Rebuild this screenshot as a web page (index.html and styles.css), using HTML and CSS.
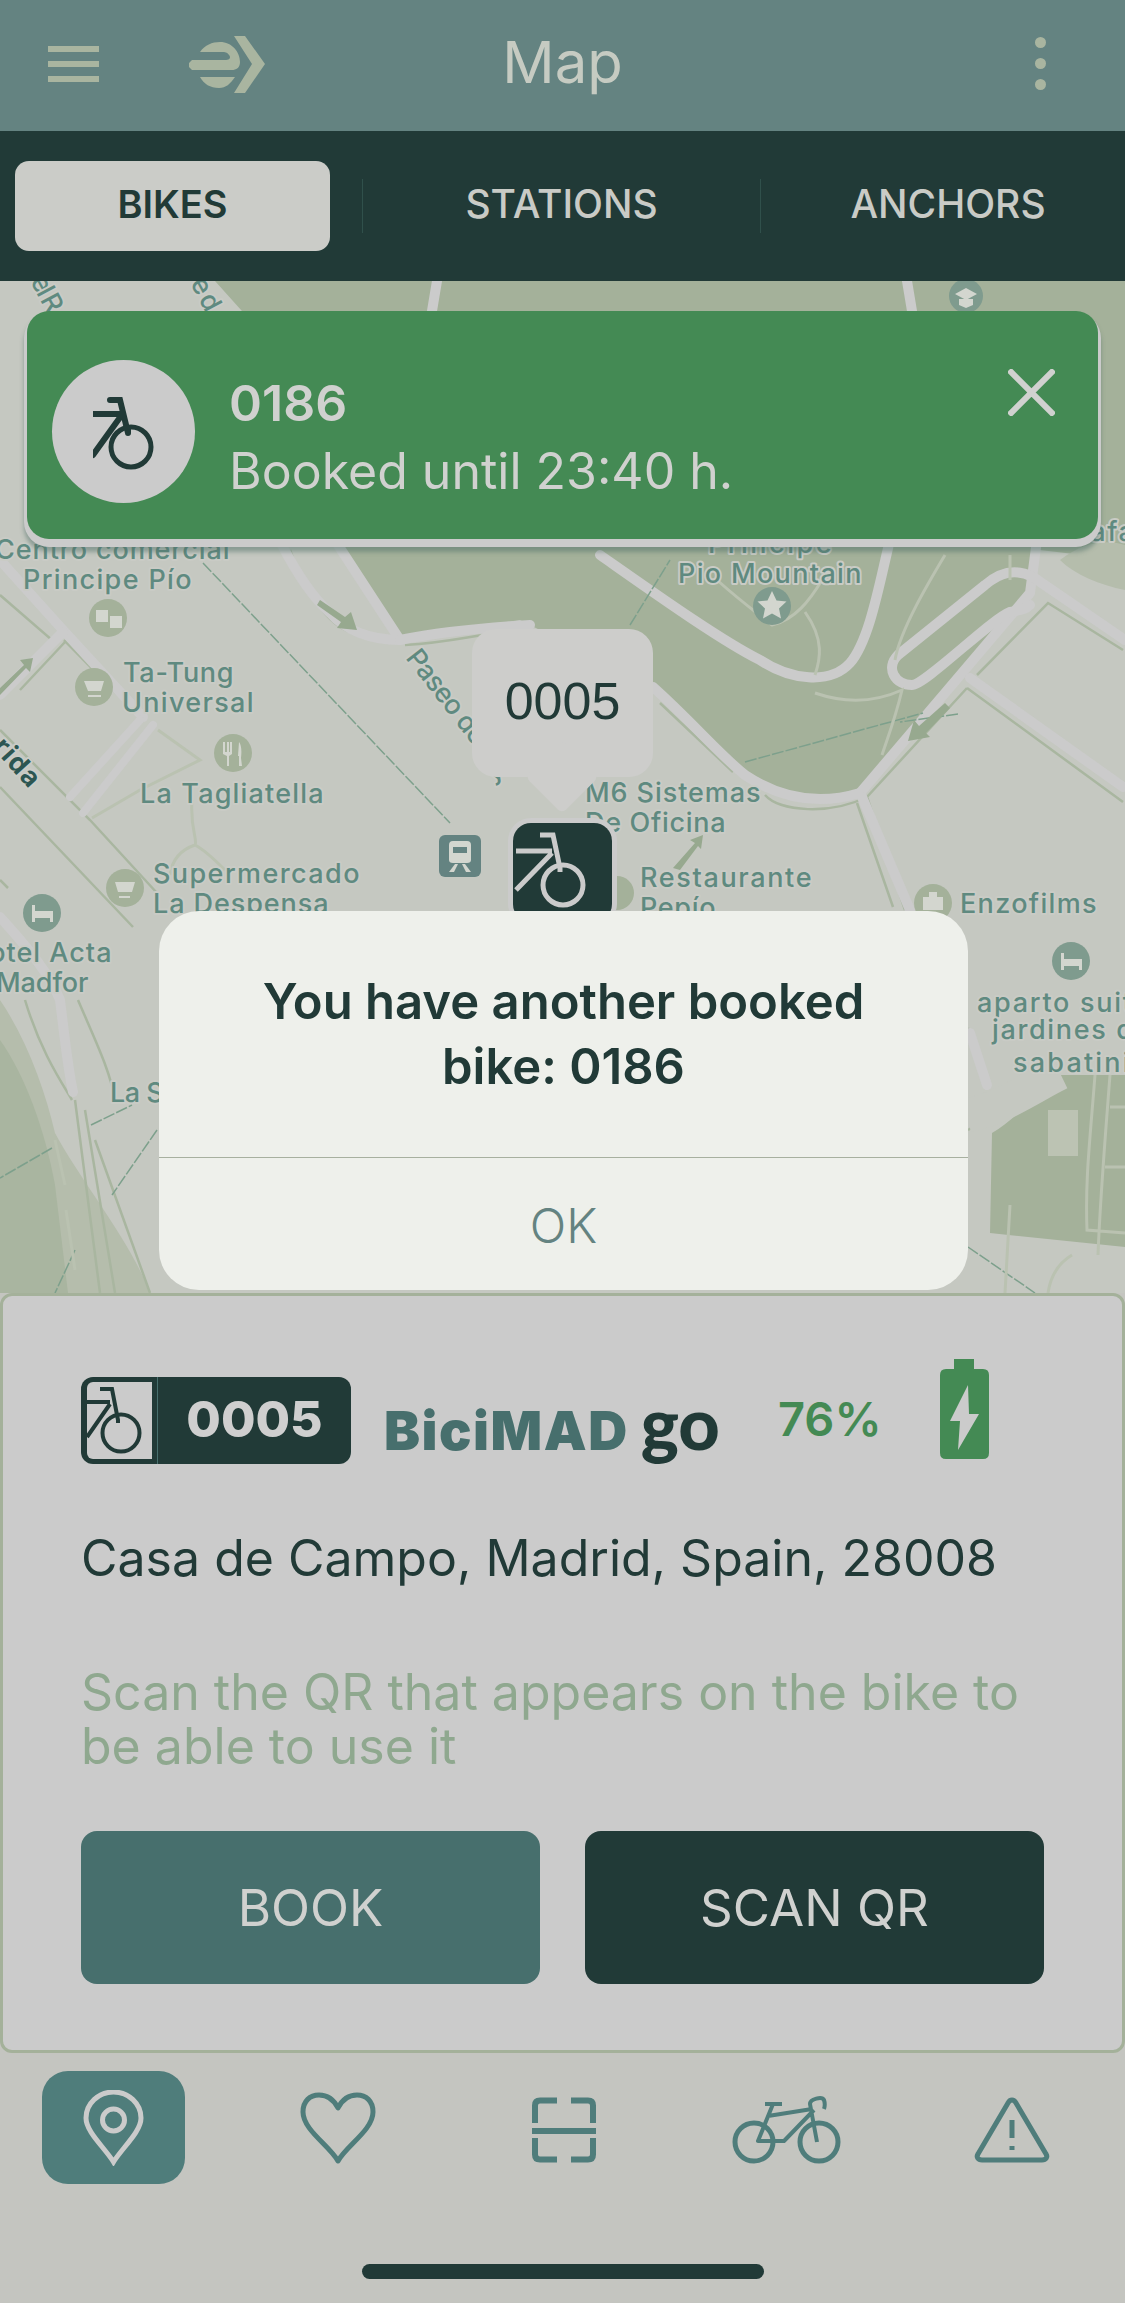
FILE: index.html
```html
<!DOCTYPE html>
<html lang="en">
<head>
<meta charset="utf-8">
<title>Map</title>
<link rel="stylesheet" href="styles.css">
</head>
<body>
<div class="app">
  <header class="topbar">
    <svg class="topbar-icons" viewBox="0 0 300 131" aria-hidden="true">
      <g class="olive">
        <rect x="48" y="46" width="51" height="6"/><rect x="48" y="61" width="51" height="6"/><rect x="48" y="76" width="51" height="6"/>
        <path d="M200 52C205 45 212 42 220 42C232 42 240 52 240 62C240 68 236 70 232 70H192L189 67V63L192 60H226C230 60 231 57 229 55C227 52 225 52 222 52Z"/>
        <path d="M200 77H235C230 84 226 88 219 88C210 88 204 84 200 77Z"/>
        <path d="M234 36H245L265 64L245 93H234L252 64Z"/>
      </g>
    </svg>
    <h1 class="title">Map</h1>
    <div class="dots"><i></i><i></i><i></i></div>
  </header>

  <nav class="tabs">
    <div class="tab-cell"><span class="tab active">BIKES</span></div>
    <div class="tab-cell sep"><span class="tab">STATIONS</span></div>
    <div class="tab-cell sep last"><span class="tab">ANCHORS</span></div>
  </nav>

  <main class="map">
    <svg class="map-art" viewBox="0 281 1125 1012" aria-hidden="true">
      <rect class="land" x="0" y="281" width="1125" height="1012"/>
      <!-- parks -->
      <path class="park" d="M215 281H1125V560L1040 550L1027 597L860 792C830 803 790 805 745 778L653 687L520 620L398 637L337 550L300 420L250 320Z"/>
      <path class="park-soft" d="M1060 560C1085 540 1110 540 1125 545V590C1100 585 1075 575 1060 560Z"/>
      <path class="park" d="M992 1133C1015 1120 1040 1090 1060 1075H1125V1247L990 1233Z"/>
      <path class="park-soft" d="M0 1000C27 1040 45 1090 55 1133C80 1180 130 1240 150 1293H0Z"/>
      <path class="park-deep" d="M0 1040C25 1075 45 1130 55 1185L68 1293H0Z"/>
      <rect class="land-soft" x="1048" y="1110" width="30" height="46"/>
      <!-- thin block outlines -->
      <g class="edge">
        <path d="M0 595L52 640L0 695M64 640L143 720M65 642L20 690"/>
        <path d="M0 730L90 820L157 893M0 787L133 927M0 880L8 888"/>
        <path d="M660 703L733 772M867 797C830 815 780 812 765 795"/>
        <path d="M977 675L1048 603L1123 650M967 688L1123 802M967 688L867 797L905 910M857 803L893 907"/>
        <path d="M968 1130L1045 1085M968 1112C1000 1110 1040 1080 1060 1070M968 1028L990 1085"/>
        <path d="M405 645C460 642 480 632 520 632M350 632C330 625 305 595 290 550"/>
        <path d="M25 1000C40 1050 60 1080 72 1100M78 1000C95 1040 110 1070 115 1100"/>
        <path d="M75 1100L100 1293M85 1110L115 1293M95 1140L150 1293"/>
      </g>
      <!-- roads -->
      <g class="road">
        <path d="M0 560L63 630L143 717"/>
        <path d="M0 695L63 632"/>
        <path d="M282 545C295 570 310 595 330 613C345 630 370 640 400 640"/>
        <path d="M338 545L398 637"/>
        <path d="M400 640C440 632 480 628 530 625"/>
        <path d="M600 555C650 590 720 640 760 660C790 680 830 685 850 663C870 640 880 580 890 540"/>
        <path d="M653 687C690 720 720 755 745 775C790 805 830 802 860 793"/>
        <path d="M860 793L1030 593L1037 540"/>
        <path d="M862 797L910 910"/>
        <path d="M1125 640L1033 577C1015 568 1000 572 985 585L898 655C885 668 895 685 912 685C925 685 990 620 1010 612C1020 610 1025 610 1030 605"/>
        <path d="M970 678L1123 787"/>
        <path d="M0 917C30 950 50 975 60 1000C65 1040 68 1070 73 1092"/>
        <path d="M970 1033L987 1085"/>
        <path d="M437 281L432 311M907 281L912 311"/>
      </g>
      <g class="road thin">
        <path d="M140 720L70 797"/>
        <path d="M153 725L83 813"/>
      </g>
      <path class="road wide" d="M968 1115C1000 1110 1035 1085 1060 1073"/>
      <!-- tram and dashed lines -->
      <g class="rail">
        <path d="M203 563L450 823"/>
        <path d="M745 762L923 713M958 714L900 722"/>
        <path d="M630 625L670 560"/>
        <path d="M52 1148L0 1178M91 1125L132 1105M157 1130L112 1195M75 1250L55 1293"/>
        <path d="M968 1247L1035 1293"/>
      </g>
      <!-- footpaths -->
      <g class="path">
        <path d="M717 580C745 605 760 615 772 625C795 620 810 600 822 580"/>
        <path d="M805 612C825 640 820 660 815 675"/>
        <path d="M815 693C850 705 880 700 902 690C895 720 885 745 882 755"/>
        <path d="M895 660C900 630 930 580 945 555"/>
        <path d="M158 730L200 760L140 790L92 818M192 800C190 830 198 840 195 845C180 850 172 860 170 875M195 845C205 850 215 860 225 870"/>
        <path d="M1010 580V555"/>
        <path d="M1095 1075C1090 1140 1085 1180 1087 1230L1125 1233M1110 1075C1105 1140 1100 1200 1098 1255M1110 1107H1125M1105 1167H1125M1010 1205L1005 1293M1072 1255C1055 1265 1050 1280 1048 1293"/>
        <path d="M55 1140L65 1185M66 1210L75 1270"/>
      </g>
      <!-- arrows -->
      <g class="arrow">
        <path d="M320 600L345 617L351 612L357 630L337 628L341 622L317 605Z"/>
        <path d="M0 688L24 665L20 660L33 658L30 672L26 668L0 695Z"/>
        <path d="M945 703L950 708L926 733L930 737L908 741L914 720L919 726Z"/>
        <path d="M673 868L695 843L690 840L703 835L701 849L698 846L680 870Z"/>
      </g>
      <!-- POI -->
      <g class="poi">
        <circle cx="108" cy="618" r="19"/><circle cx="94" cy="687" r="19"/><circle cx="233" cy="753" r="19"/><circle cx="125" cy="888" r="19"/><circle cx="933" cy="903" r="19"/><circle cx="617" cy="893" r="17"/>
      </g>
      <g class="poi-dark">
        <circle cx="42" cy="913" r="19"/><circle cx="1071" cy="961" r="19"/><circle cx="772" cy="606" r="19"/><circle cx="966" cy="296" r="17"/>
      </g>
      <g class="glyph">
        <path d="M96 610h12v12h-12zM110 616h12v12h-12z"/>
        <path d="M84 681h20l-3 10H88zM88 695h13v2H88z"/>
        <path d="M226 742h2v10h2v-10h2v10h1v-10h2v12l-3 2v10h-2v-10l-4-2zM242 742c2 2 3 8 2 16l1 8h-3v-10h-1z" transform="translate(-3 0)"/>
        <path d="M115 882h20l-3 10h-14zM119 896h11v2h-11z"/>
        <path d="M923 897h20v13h-20zM929 892h8v5h-8z"/>
        <path d="M32 905h3v6h18v11h-3v-4h-15v4h-3z"/>
        <path d="M1061 953h3v6h18v11h-3v-4h-15v4h-3z"/>
        <path d="M772 591l4.500 9.500 10 1-7.500 7 2 10-9-5-9 5 2-10-7.500-7 10-1z"/>
        <path d="M966 288l11 6-11 6-11-6zM959 299h14v6l-7 3-7-3z"/>
      </g>
      <rect class="train" x="439" y="835" width="42" height="42" rx="6"/>
      <path class="glyph" d="M453 841h14q4 0 4 4v15q0 3-4 3h-14q-4 0-4-3v-15q0-4 4-4zM453 847v6h14v-6zM449 872l6-8h3l-4 8zM471 872l-6-8h-3l4 8z"/>
      <!-- labels -->
      <g class="label">
        <text x="-5" y="559" textLength="236">Centro comercial</text>
        <text x="23" y="589" textLength="170">Principe Pío</text>
        <text x="123" y="682" textLength="112">Ta-Tung</text>
        <text x="122" y="712" textLength="133">Universal</text>
        <text x="140" y="803" textLength="185">La Tagliatella</text>
        <text x="153" y="883" textLength="208">Supermercado</text>
        <text x="153" y="913" textLength="177">La Despensa</text>
        <text x="-32" y="962" textLength="145">Hotel Acta</text>
        <text x="-4" y="992" textLength="94">Madfor</text>
        <text x="110" y="1102" textLength="70">La Sa</text>
        <text x="585" y="802" textLength="177">M6 Sistemas</text>
        <text x="585" y="832" textLength="142">De Oficina</text>
        <text x="640" y="887" textLength="173">Restaurante</text>
        <text x="640" y="917" textLength="77">Pepío</text>
        <text x="960" y="913" textLength="138">Enzofilms</text>
        <text x="678" y="583" textLength="185">Pio Mountain</text>
        <text x="708" y="553" textLength="125">Principe</text>
        <text x="1069" y="541">Cafa</text>
        <text x="977" y="1012" textLength="190">aparto suites</text>
        <text x="992" y="1039" textLength="160">jardines de</text>
        <text x="1013" y="1072" textLength="118">sabatini</text>
        <text transform="translate(405 658) rotate(52)" textLength="114">Paseo de</text>
        <text transform="translate(492 782) rotate(-30)">y</text>
        <text transform="translate(30 281) rotate(62)" textLength="40">el R</text>
        <text transform="translate(190 283) rotate(62)" textLength="36">e d</text>
        <text class="strong end" transform="translate(30 790) rotate(48)">Florida</text>
      </g>
    </svg>

    <section class="banner">
      <div class="banner-disc">
        <svg class="banner-bike" viewBox="-38 -50 64 76" aria-hidden="true"><path d="M-21 -47H-11L-3 -14M-38 -33H-9M-10 -31L-38 8M-3 -14V-18"/><circle cx="0" cy="0" r="20"/></svg>
      </div>
      <div class="banner-text">
        <strong class="banner-id">0186</strong>
        <span class="banner-sub">Booked until 23:40 h.</span>
      </div>
      <svg class="banner-close" viewBox="0 0 46 46" aria-hidden="true"><path d="M1 1L45 45M45 1L1 45"/></svg>
    </section>

    <div class="callout">0005</div>
    <div class="marker">
      <svg class="marker-bike" viewBox="0 0 99 99" aria-hidden="true"><g transform="translate(50 62)"><path d="M-23 -50H-10L-3 -17V-13M-47 -34H-11M-11 -32L-47 5"/><circle r="20"/></g></svg>
    </div>

    <div class="dialog">
      <p class="dialog-msg">You have another booked<br>bike: 0186</p>
      <div class="dialog-ok">OK</div>
    </div>
  </main>

  <section class="panel">
    <div class="info-row">
      <div class="plate">
        <span class="plate-icon">
          <svg viewBox="0 0 65 77" aria-hidden="true"><g transform="translate(34 51)"><path d="M-21 -44H-9L-3 -13V-10M-34 -31H-11M-11 -29L-34 4"/><circle r="18.500"/></g></svg>
        </span>
        <span class="plate-id">0005</span>
      </div>
      <div class="brand"><span class="brand-a">BiciMAD</span><span class="brand-b">go</span></div>
      <span class="pct">76%</span>
      <svg class="battery" viewBox="0 0 49 100" aria-hidden="true">
        <path class="battery-body" d="M14 0H34V10H43Q49 10 49 16V94Q49 100 43 100H6Q0 100 0 94V16Q0 10 6 10H14Z"/>
        <path class="battery-bolt" d="M28 26L10 62H20L18 91L39 55H29Z"/>
      </svg>
    </div>
    <p class="address">Casa de Campo, Madrid, Spain, 28008</p>
    <p class="hint">Scan the QR that appears on the bike to be able to use it</p>
    <div class="actions">
      <button class="btn btn-book">BOOK</button>
      <button class="btn btn-scan">SCAN QR</button>
    </div>
  </section>

  <footer class="bottom">
    <div class="nav-row">
      <div class="nav-item nav-active">
        <svg class="ic-pin" viewBox="0 0 65 76" aria-hidden="true"><path d="M32.500 72C24 58 5 42 5 28A27.500 26 0 0 1 60 28C60 42 41 58 32.500 72Z"/><circle cx="32.500" cy="30" r="11"/></svg>
      </div>
      <div class="nav-item">
        <svg class="ic" width="80" height="74" viewBox="0 0 80 74" aria-hidden="true"><path d="M40 69C32 54 5 38 5 20C5 9 12 3 21 3C29 3 36 8 40 16C44 8 51 3 59 3C68 3 75 9 75 20C75 38 48 54 40 69Z"/></svg>
      </div>
      <div class="nav-item">
        <svg class="ic ic-bold" width="66" height="66" viewBox="0 0 66 66" aria-hidden="true"><path d="M26 3.500H9Q4 3.500 4 8.500V26M40 3.500H57Q62 3.500 62 8.500V26M1 34H65M4 41V57.500Q4 62.500 9 62.500H26M62 41V57.500Q62 62.500 57 62.500H40"/></svg>
      </div>
      <div class="nav-item">
        <svg class="ic" width="110" height="68" viewBox="0 0 110 68" aria-hidden="true"><circle cx="22" cy="46" r="19"/><circle cx="87" cy="46" r="19"/><path stroke-width="4" d="M33 8H50M41 8L26 45H52L82 14M36 20L80 13M85 46L78 8C78 3 90 0 92 4C93 7 93 10 92 13"/></svg>
      </div>
      <div class="nav-item">
        <svg class="ic" width="76" height="66" viewBox="0 0 76 66" aria-hidden="true"><path d="M38 3C36 3 35 4 34 6L4 57C2 60 4 63 8 63H68C72 63 74 60 72 57L42 6C41 4 40 3 38 3Z"/><path d="M38 23V41M38 49V53"/></svg>
      </div>
    </div>
    <div class="home-bar"></div>
  </footer>
</div>
</body>
</html>
```

FILE: styles.css
```css
* { box-sizing: border-box; }
html, body { margin: 0; padding: 0; }
body { font-family: Inter, "Open Sans", sans-serif; background: #c4c5c0; color: #213a37; }
.app { width: 1125px; height: 2303px; display: flex; flex-direction: column; overflow: hidden; }

.topbar { position: relative; height: 131px; background: #648381; display: flex; align-items: center; justify-content: center; flex: none; }
.topbar-icons { position: absolute; left: 0; top: 0; width: 300px; height: 131px; }
.olive { fill: #a9b5a0; }
.title { margin: 0 0 7px; font-size: 58px; font-weight: 400; line-height: 1; color: #c6cbc2; }
.dots { position: absolute; left: 1035px; top: 37px; display: flex; flex-direction: column; gap: 10px; }
.dots i { width: 11px; height: 11px; border-radius: 50%; background: #a9b5a0; display: block; }

.tabs { flex: none; height: 150px; background: #213a37; display: grid; grid-template-columns: 362px 398px 1fr; align-items: center; }
.tab-cell { display: flex; justify-content: center; height: 54px; align-items: center; }
.tab-cell.sep { border-left: 1px solid #30504b; }
.tab-cell.last { padding-left: 10px; }
.tab { font-size: 39px; font-weight: 500; color: #c9cbc6; line-height: 1; padding-bottom: 5px; }
.tab.active { width: 315px; height: 90px; margin-left: -17px; display: flex; align-items: center; justify-content: center; background: #cbccc8; color: #213a37; border-radius: 14px; font-size: 38px; font-weight: 600; }

.map { position: relative; flex: none; height: 1012px; }
.map-art { display: block; width: 1125px; height: 1012px; }
.land { fill: #c5c8c1; }
.land-soft { fill: #bcc3b3; }
.park { fill: #a4b19a; }
.park-soft { fill: #b5bdac; }
.park-deep { fill: #a9b5a0; }
.edge { fill: none; stroke: #a9b6a0; stroke-width: 2.500; }
.road { fill: none; stroke: #cbcbcb; stroke-width: 10; stroke-linecap: round; stroke-linejoin: round; }
.road.thin { stroke-width: 8; }
.road.wide { stroke: #c5c8c1; stroke-width: 34; stroke-linecap: butt; }
.rail { fill: none; stroke: #7da08c; stroke-width: 1.500; stroke-dasharray: 12 2; }
.path { fill: none; stroke: #bac2b1; stroke-width: 3; }
.arrow { fill: #97a98f; }
.poi { fill: #a4b19a; }
.poi-dark { fill: #7f9b8e; }
.glyph { fill: #d3d6cf; }
.train { fill: #648381; }
.label text { font-family: Inter, sans-serif; font-size: 27px; font-weight: 500; letter-spacing: 1.500px; fill: #5f8a80; stroke: #c9cbc5; stroke-width: 4px; paint-order: stroke; stroke-linejoin: round; }
.label text.strong { fill: #2c5652; font-weight: 700; }
.label text.end { text-anchor: end; }

.banner { position: absolute; left: 27px; top: 30px; width: 1071px; height: 228px; background: #448a54; border-radius: 22px; display: flex; align-items: center; padding: 12px 0 0 25px; box-shadow: 0 5px 0 3px #cbcbcb, 0 10px 4px 3px rgba(80,112,104,.5); }
.banner-disc { width: 143px; height: 143px; border-radius: 50%; background: #cbcbcb; flex: none; display: flex; align-items: center; justify-content: center; }
.banner-bike { width: 64px; height: 76px; margin: 8px 0 0 2px; overflow: hidden; }
.banner-bike path, .banner-bike circle { fill: none; stroke: #213a37; stroke-width: 5; stroke-linecap: round; }
.banner-bike path { stroke-width: 6; }
.banner-text { margin: 11px 0 0 34px; display: flex; flex-direction: column; color: #d0d1cf; }
.banner-id { font-size: 50px; font-weight: 600; line-height: 68px; }
.banner-sub { font-size: 50px; font-weight: 400; line-height: 68px; }
.banner-close { position: absolute; left: 981px; top: 58px; width: 47px; height: 47px; }
.banner-close path { fill: none; stroke: #d0d1cf; stroke-width: 6; }

.callout { position: absolute; left: 472px; top: 348px; width: 181px; height: 148px; background: #cdcdcb; border-radius: 24px; display: flex; align-items: center; justify-content: center; font-family: "Liberation Sans", sans-serif; font-size: 52px; padding-bottom: 4px; color: #213a37; }
.callout::after { content: ""; position: absolute; left: 64px; top: 122px; width: 52px; height: 52px; background: #cdcdcb; transform: rotate(45deg); border-radius: 6px; }
.marker { position: absolute; left: 513px; top: 542px; width: 99px; height: 99px; background: #213a37; border-radius: 18px; box-shadow: 0 0 0 5px #cbcbcb; overflow: hidden; }
.marker-bike { display: block; width: 99px; height: 99px; }
.marker-bike path, .marker-bike circle { fill: none; stroke: #cbcbcb; stroke-width: 5; }

.dialog { position: absolute; left: 159px; top: 630px; width: 809px; height: 379px; background: #eef0eb; border-radius: 40px; display: flex; flex-direction: column; }
.dialog-msg { flex: none; height: 247px; margin: 0; padding-top: 58px; text-align: center; font-size: 49px; line-height: 65px; font-weight: 600; color: #213a37; border-bottom: 1px solid #a7b09f; }
.dialog-ok { flex: 1; display: flex; align-items: center; justify-content: center; font-size: 48px; font-weight: 300; color: #648381; padding-top: 2px; }

.panel { flex: none; height: 760px; background: #cbcbcb; border: 3px solid #a4b19a; border-radius: 12px; padding: 81px 78px 0; }
.info-row { display: flex; align-items: flex-start; height: 107px; position: relative; }
.plate { width: 270px; height: 87px; background: #213a37; border-radius: 12px; display: flex; align-items: center; flex: none; }
.plate-icon { width: 65px; height: 77px; margin-left: 6px; background: #cbcbcb; border-radius: 6px 0 0 6px; flex: none; }
.plate-icon svg { display: block; width: 65px; height: 77px; }
.plate-icon path, .plate-icon circle { fill: none; stroke: #213a37; stroke-width: 4; }
.plate-id { flex: 1; font-size: 50px; font-weight: 800; color: #cfcfcf; line-height: 1; margin-left: 5px; border-left: 1px solid #476f6d; height: 87px; display: flex; align-items: center; justify-content: center; padding-bottom: 3px; }
.brand { margin: 3px 0 0 33px; display: flex; align-items: baseline; height: 84px; line-height: 84px; }
.brand-a { font-size: 54px; font-weight: 900; color: #476f6d; letter-spacing: 1.500px; }
.brand-b { font-family: Lato, sans-serif; font-size: 72px; font-weight: 900; color: #213a37; margin-left: 12px; }
.pct { position: absolute; left: 697px; top: 0; font-size: 47px; font-weight: 600; color: #448a54; line-height: 84px; }
.battery { position: absolute; left: 859px; top: -18px; width: 49px; height: 100px; }
.battery-body { fill: #448a54; }
.battery-bolt { fill: #cbcbcb; }

.address { margin: 44px 0 0; font-size: 50px; line-height: 60px; color: #213a37; }
.hint { margin: 77px 0 0; font-size: 50px; line-height: 54px; color: #8fa88f; }
.actions { display: flex; gap: 45px; margin-top: 58px; }
.btn { width: 459px; height: 153px; border: 0; border-radius: 16px; font-family: inherit; font-size: 51px; font-weight: 400; color: #d0d1cf; padding: 0; }
.btn-book { background: #476f6d; }
.btn-scan { background: #213a37; }

.bottom { flex: 1; background: #c4c5c0; position: relative; }
.nav-row { display: flex; align-items: flex-start; padding: 18px 0 0 42px; }
.nav-item { display: flex; align-items: center; justify-content: center; height: 113px; flex: none; }
.nav-active { width: 143px; background: #4f7d7b; border-radius: 26px; }
.nav-item:nth-child(2) { width: 80px; margin-left: 113px; padding-top: 2px; }
.nav-item:nth-child(3) { width: 66px; margin-left: 153px; padding-top: 4px; }
.nav-item:nth-child(4) { width: 110px; margin-left: 135px; padding-top: 4px; }
.nav-item:nth-child(5) { width: 76px; margin-left: 132px; padding-top: 4px; }
.ic { fill: none; stroke: #4f7d7b; stroke-width: 5; stroke-linejoin: round; display: block; }
.ic-bold { stroke-width: 6; }
.ic-pin { width: 65px; height: 76px; display: block; fill: none; stroke: #cbcbcb; stroke-width: 5; }
.home-bar { position: absolute; left: 362px; top: 211px; width: 402px; height: 15px; border-radius: 8px; background: #213a37; }
```
